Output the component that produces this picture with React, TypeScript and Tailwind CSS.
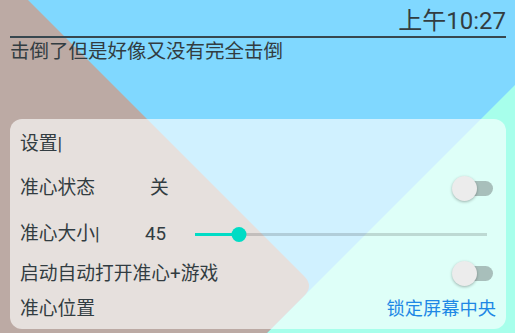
import React from 'react';

const ink = 'text-[#323c41]';

function Toggle() {
  return (
    <div className="relative w-[41px] h-[25px] flex items-center">
      <div className="absolute right-0 w-[34px] h-[15px] rounded-full bg-[#a8bfbb]" />
      <div className="absolute left-0 w-[25px] h-[25px] rounded-full bg-[#ececec] shadow-[0_1px_3px_rgba(0,0,0,0.3)]" />
    </div>
  );
}

function Slider({ value, max }: { value: number; max: number }) {
  const pct = (value / max) * 100;
  return (
    <div className="relative flex-1 h-[16px] flex items-center">
      <div className="w-full h-[3px] bg-[#00000026]" />
      <div className="absolute left-0 h-[3px] bg-[#00dcc5]" style={{ width: `${pct}%` }} />
      <div
        className="absolute w-[15px] h-[15px] rounded-full bg-[#00dcc5] -translate-x-1/2"
        style={{ left: `${pct}%` }}
      />
    </div>
  );
}

export default function App() {
  return (
    <div className={`relative w-[515px] h-[333px] overflow-hidden font-[Roboto,'Noto_Sans_CJK_SC',sans-serif] ${ink}`}>
      {/* background shapes */}
      <svg className="absolute inset-0" width="515" height="333" viewBox="0 0 515 333">
        <rect width="515" height="333" fill="#80D8FF" />
        <polygon points="515,85 515,333 267,333" fill="#A7FFEB" />
        <path d="M0 0 L28 0 L304 276 Q314 286 304 296 L267 333 L0 333 Z" fill="#BCAAA4" />
      </svg>

      <div className="relative flex flex-col">
        <div className="flex justify-end pr-[9px] pt-[9px] pb-[3px]">
          <span className="text-[24px] leading-[24px]">上午10:27</span>
        </div>
        <div className="ml-[10px] mr-[9px] h-[1.5px] bg-[#37474f]" />
        <div className="px-[10px] mt-[2.5px] text-[19.5px] leading-[24px]">击倒了但是好像又没有完全击倒</div>

        <div className="mt-[55px] ml-[10px] w-[496px] h-[210px] rounded-[12px] bg-[#ffffffa1] pt-[6px] pl-[10px] pr-[10px] flex flex-col text-[18.75px] leading-[24px]">
          <div className="h-[37px] flex items-center">设置|</div>

          <div className="h-[52px] flex items-center">
            <span className="w-[130px]">准心状态</span>
            <span>关</span>
            <div className="ml-auto mr-[3px]">
              <Toggle />
            </div>
          </div>

          <div className="h-[39px] flex items-center">
            <span className="w-[125px]">准心大小|</span>
            <span className="w-[50px]">45</span>
            <div className="flex-1 flex mr-[9px] mt-[2px]">
              <Slider value={45} max={300} />
            </div>
          </div>

          <div className="h-[42px] flex items-center">
            <span>启动自动打开准心+游戏</span>
            <div className="ml-auto mr-[3px] -mt-[1px]">
              <Toggle />
            </div>
          </div>

          <div className="h-[28px] flex items-center justify-between">
            <span>准心位置</span>
            <span className="text-[#1e88e5] text-[18.25px]">锁定屏幕中央</span>
          </div>
        </div>
      </div>
    </div>
  );
}
